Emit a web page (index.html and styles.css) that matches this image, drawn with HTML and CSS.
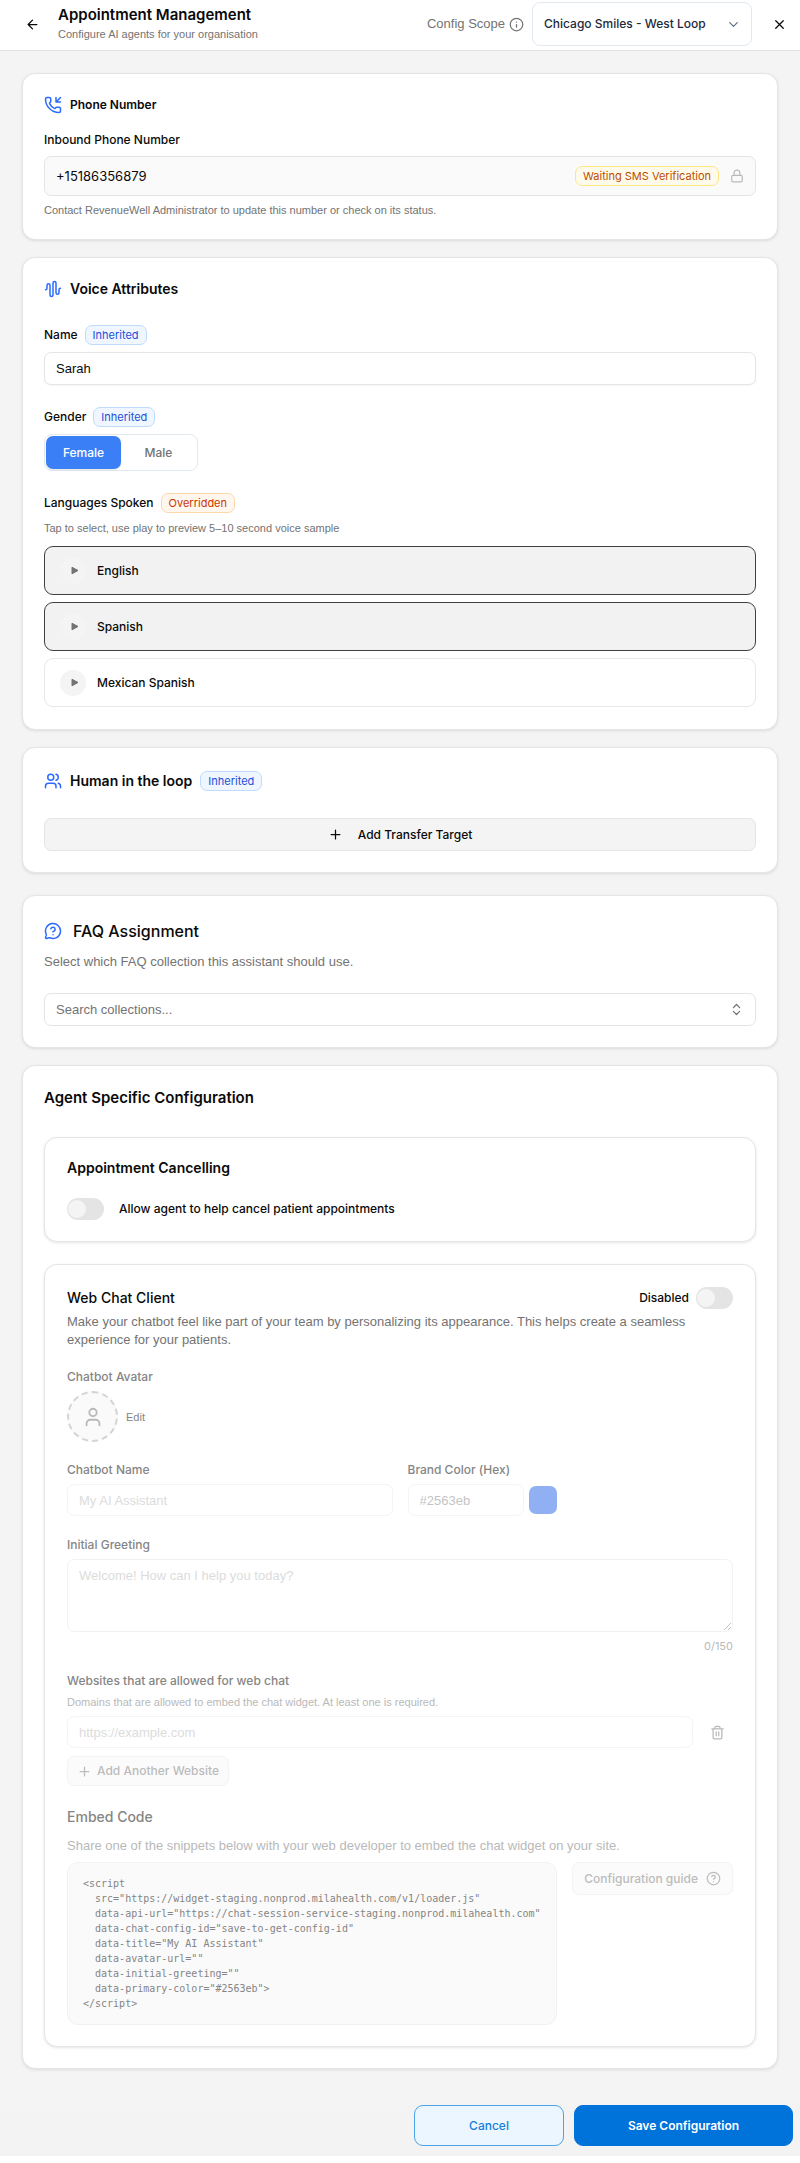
FILE: index.html
```html
<!DOCTYPE html>
<html lang="en">
<head>
<meta charset="utf-8">
<meta name="viewport" content="width=device-width, initial-scale=1">
<title>Appointment Management</title>
<link rel="stylesheet" href="styles.css">
</head>
<body>
<header class="topbar">
  <button class="icon-button back" type="button" aria-label="Back">
    <svg class="icon" width="15" height="15" viewBox="0 0 24 24"><path d="m12 19-7-7 7-7M19 12H5"/></svg>
  </button>
  <div class="heading">
    <h1>Appointment Management</h1>
    <p>Configure AI agents for your organisation</p>
  </div>
  <div class="scope">
    <label for="scope">Config Scope</label>
    <svg class="icon" width="15" height="15" viewBox="0 0 24 24"><circle cx="12" cy="12" r="10"/><path d="M12 16v-4M12 8h.01"/></svg>
    <div class="scope-select">
      <select id="scope"><option>Chicago Smiles - West Loop</option></select>
      <svg class="icon" width="15" height="15" viewBox="0 0 24 24"><path d="m6 9 6 6 6-6"/></svg>
    </div>
  </div>
  <button class="icon-button close" type="button" aria-label="Close">
    <svg class="icon" width="15" height="15" viewBox="0 0 24 24"><path d="M18 6 6 18M6 6l12 12"/></svg>
  </button>
</header>

<main class="page">
  <section class="card phone">
    <h2 class="title small">
      <svg class="icon" width="18" height="18" viewBox="0 0 24 24"><path d="M16 2v6h6M22 2l-6 6"/><path d="M13.832 16.568a1 1 0 0 0 1.213-.303l.355-.465A2 2 0 0 1 17 15h3a2 2 0 0 1 2 2v3a2 2 0 0 1-2 2A18 18 0 0 1 2 4a2 2 0 0 1 2-2h3a2 2 0 0 1 2 2v3a2 2 0 0 1-.8 1.6l-.468.351a1 1 0 0 0-.292 1.233 14 14 0 0 0 6.392 6.384"/></svg>
      Phone Number
    </h2>
    <label class="label" for="phone">Inbound Phone Number</label>
    <div class="phone-field">
      <input id="phone" type="text" value="+15186356879" readonly>
      <span class="badge amber">Waiting SMS Verification</span>
      <svg class="icon lock" width="14" height="14" viewBox="0 0 24 24"><rect x="3" y="11" width="18" height="11" rx="2"/><path d="M7 11V7a5 5 0 0 1 10 0v4"/></svg>
    </div>
    <p class="hint">Contact RevenueWell Administrator to update this number or check on its status.</p>
  </section>

  <section class="card voice">
    <h2 class="title strong">
      <svg class="icon" width="18" height="18" viewBox="0 0 24 24"><path d="M2 13a2 2 0 0 0 2-2V7a2 2 0 0 1 4 0v13a2 2 0 0 0 4 0V4a2 2 0 0 1 4 0v13a2 2 0 0 0 4 0v-4a2 2 0 0 1 2-2"/></svg>
      Voice Attributes
    </h2>
    <div class="field">
      <div class="label-row"><label class="label" for="name">Name</label><span class="badge blue">Inherited</span></div>
      <input class="input" id="name" type="text" value="Sarah">
    </div>
    <div class="field">
      <div class="label-row"><span class="label" id="gender">Gender</span><span class="badge blue">Inherited</span></div>
      <div class="segmented" role="group" aria-labelledby="gender">
        <button class="segment active" type="button" aria-pressed="true">Female</button>
        <button class="segment" type="button" aria-pressed="false">Male</button>
      </div>
    </div>
    <div class="field">
      <div class="label-row"><span class="label">Languages Spoken</span><span class="badge orange">Overridden</span></div>
      <p class="hint">Tap to select, use play to preview 5–10 second voice sample</p>
      <ul class="languages">
        <li class="language selected">
          <button class="play" type="button" aria-label="Play English sample"><svg width="9" height="9" viewBox="0 0 9 9"><path d="M2 1.2v6.6l6-3.3z"/></svg></button>
          <button class="language-name" type="button" aria-pressed="true">English</button>
        </li>
        <li class="language selected">
          <button class="play" type="button" aria-label="Play Spanish sample"><svg width="9" height="9" viewBox="0 0 9 9"><path d="M2 1.2v6.6l6-3.3z"/></svg></button>
          <button class="language-name" type="button" aria-pressed="true">Spanish</button>
        </li>
        <li class="language">
          <button class="play" type="button" aria-label="Play Mexican Spanish sample"><svg width="9" height="9" viewBox="0 0 9 9"><path d="M2 1.2v6.6l6-3.3z"/></svg></button>
          <button class="language-name" type="button" aria-pressed="false">Mexican Spanish</button>
        </li>
      </ul>
    </div>
  </section>

  <section class="card human">
    <h2 class="title strong">
      <svg class="icon" width="18" height="18" viewBox="0 0 24 24"><path d="M16 21v-2a4 4 0 0 0-4-4H6a4 4 0 0 0-4 4v2"/><circle cx="9" cy="7" r="4"/><path d="M22 21v-2a4 4 0 0 0-3-3.87M16 3.13a4 4 0 0 1 0 7.75"/></svg>
      Human in the loop
      <span class="badge blue">Inherited</span>
    </h2>
    <button class="add-target" type="button">
      <svg class="icon" width="15" height="15" viewBox="0 0 24 24"><path d="M5 12h14M12 5v14"/></svg>
      Add Transfer Target
    </button>
  </section>

  <section class="card faq">
    <h2 class="title large">
      <svg class="icon" width="18" height="18" viewBox="0 0 24 24"><path d="M2.992 16.342a2 2 0 0 1 .094 1.167l-1.065 3.29a1 1 0 0 0 1.236 1.168l3.413-.998a2 2 0 0 1 1.099.092 10 10 0 1 0-4.777-4.719"/><path d="M9.09 9a3 3 0 0 1 5.83 1c0 2-3 3-3 3M12 17h.01"/></svg>
      FAQ Assignment
    </h2>
    <p class="description">Select which FAQ collection this assistant should use.</p>
    <button class="combobox" type="button" aria-haspopup="listbox">
      Search collections...
      <svg class="icon" width="15" height="15" viewBox="0 0 24 24"><path d="m7 15 5 5 5-5M7 9l5-5 5 5"/></svg>
    </button>
  </section>

  <section class="card agent">
    <h2 class="title bold">Agent Specific Configuration</h2>

    <section class="card inner cancelling">
      <h3 class="title strong">Appointment Cancelling</h3>
      <label class="switch-row"><input class="switch" type="checkbox" role="switch">Allow agent to help cancel patient appointments</label>
    </section>

    <section class="card inner webchat">
      <div class="webchat-head">
        <h3 class="title">Web Chat Client</h3>
        <label class="switch-label">Disabled<input class="switch" type="checkbox" role="switch"></label>
      </div>
      <p class="description webchat-text">Make your chatbot feel like part of your team by personalizing its appearance. This helps create a seamless experience for your patients.</p>

      <div class="webchat-body">
        <div class="group">
          <span class="label">Chatbot Avatar</span>
          <div class="avatar-row">
            <span class="avatar"><svg class="icon" width="22" height="22" viewBox="0 0 24 24"><circle cx="12" cy="7" r="4"/><path d="M19 21v-2a4 4 0 0 0-4-4H9a4 4 0 0 0-4 4v2"/></svg></span>
            <button class="edit" type="button" disabled>Edit</button>
          </div>
        </div>
        <div class="columns">
          <div class="group">
            <label class="label" for="bot">Chatbot Name</label>
            <input class="input" id="bot" type="text" placeholder="My AI Assistant" disabled>
          </div>
          <div class="group">
            <label class="label" for="hex">Brand Color (Hex)</label>
            <div class="color-row">
              <input class="input" id="hex" type="text" value="#2563eb" disabled>
              <input class="swatch" type="color" value="#2563eb" aria-label="Brand color" disabled>
            </div>
          </div>
        </div>
        <div class="group greeting">
          <label class="label" for="greeting">Initial Greeting</label>
          <textarea class="input" id="greeting" placeholder="Welcome! How can I help you today?" disabled></textarea>
          <span class="counter">0/150</span>
        </div>
        <div class="sites">
          <label class="label" for="site">Websites that are allowed for web chat</label>
          <p class="hint">Domains that are allowed to embed the chat widget. At least one is required.</p>
          <div class="site-row">
            <input class="input" id="site" type="url" placeholder="https://example.com" disabled>
            <button class="icon-button trash" type="button" aria-label="Remove website" disabled>
              <svg class="icon" width="15" height="15" viewBox="0 0 24 24"><path d="M3 6h18M19 6v14a2 2 0 0 1-2 2H7a2 2 0 0 1-2-2V6M8 6V4a2 2 0 0 1 2-2h4a2 2 0 0 1 2 2v2M10 11v6M14 11v6"/></svg>
            </button>
          </div>
          <button class="soft-button" type="button" disabled>
            <svg class="icon" width="15" height="15" viewBox="0 0 24 24"><path d="M5 12h14M12 5v14"/></svg>
            Add Another Website
          </button>
        </div>
        <h4 class="title embed-title">Embed Code</h4>
        <p class="description embed-text">Share one of the snippets below with your web developer to embed the chat widget on your site.</p>
        <div class="embed">
          <pre class="code"><code>&lt;script
  src="https://widget-staging.nonprod.milahealth.com/v1/loader.js"
  data-api-url="https://chat-session-service-staging.nonprod.milahealth.com"
  data-chat-config-id="save-to-get-config-id"
  data-title="My AI Assistant"
  data-avatar-url=""
  data-initial-greeting=""
  data-primary-color="#2563eb"&gt;
&lt;/script&gt;</code></pre>
          <button class="soft-button guide" type="button" disabled>
            Configuration guide
            <svg class="icon" width="15" height="15" viewBox="0 0 24 24"><circle cx="12" cy="12" r="10"/><path d="M9.09 9a3 3 0 0 1 5.83 1c0 2-3 3-3 3M12 17h.01"/></svg>
          </button>
        </div>
      </div>
    </section>
  </section>
</main>

<footer class="actions">
  <button class="action cancel" type="button">Cancel</button>
  <button class="action save" type="button">Save Configuration</button>
</footer>
</body>
</html>
```

FILE: styles.css
```css
:root {
  --ui: Inter, "Liberation Sans", sans-serif;
  --text: "Liberation Sans", Arial, sans-serif;
}

* {
  box-sizing: border-box;
}

body {
  margin: 0;
  background: #fff;
  color: #0a0a0a;
  font: 400 13px/18px var(--text);
}

h1, h2, h3, h4, p, ul, pre {
  margin: 0;
  padding: 0;
}

button, input, select, textarea {
  margin: 0;
  font: inherit;
  color: inherit;
}

button {
  padding: 0;
  border: 0;
  background: none;
}

.icon {
  flex: none;
  fill: none;
  stroke: currentColor;
  stroke-width: 2;
  stroke-linecap: round;
  stroke-linejoin: round;
}

.icon-button {
  display: flex;
  flex: none;
  align-items: center;
  justify-content: center;
  width: 32px;
  height: 32px;
}

.label,
.segment,
.language-name,
.add-target,
.switch-row,
.switch-label,
.soft-button,
.action,
.scope-select select {
  font-family: var(--ui);
  font-size: 12px;
  font-weight: 500;
}

/* Top bar */
.topbar {
  display: flex;
  align-items: center;
  height: 51px;
  padding: 0 5px 2px 16px;
  border-bottom: 1px solid #e2e2e2;
}

.heading {
  flex: 1;
  margin-left: 10px;
}

.heading h1 {
  font-family: var(--ui);
  font-size: 15px;
  font-weight: 600;
  line-height: 20px;
}

.heading p {
  color: #737373;
  font-size: 11px;
}

.scope {
  display: flex;
  align-items: center;
  gap: 4px;
  color: #737373;
}

.scope-select {
  display: grid;
  align-items: center;
  margin-left: 4px;
  color: #64748b;
}

.scope-select > * {
  grid-area: 1 / 1;
}

.scope-select .icon {
  justify-self: end;
  margin-right: 11px;
  pointer-events: none;
}

.scope-select select {
  width: 220px;
  height: 44px;
  padding: 0 11px;
  border: 1px solid #e2e8f0;
  border-radius: 8px;
  background: #fff;
  color: #1e293b;
  appearance: none;
}

.close {
  margin-left: 11px;
}

/* Cards */
.page {
  display: flex;
  flex-direction: column;
  gap: 17px;
  padding: 22px 22px 36px;
  background: #f4f4f4;
}

.card {
  padding: 21px;
  border: 1px solid #e5e5e5;
  border-radius: 13px;
  background: #fff;
  box-shadow: 0 1px 3px rgb(0 0 0 / 10%);
}

.inner {
  padding: 21px 22px;
}

.title {
  display: flex;
  align-items: center;
  gap: 8px;
  font-family: var(--ui);
  font-size: 14px;
  font-weight: 500;
  line-height: 20px;
}

.title .icon {
  color: #2b6bff;
}

.title.small {
  font-size: 12px;
  font-weight: 600;
}

.title.strong {
  font-weight: 600;
}

.title.large {
  gap: 11px;
  font-size: 16px;
}

.title.bold {
  font-size: 15px;
  font-weight: 600;
}

.label-row {
  display: flex;
  align-items: center;
  gap: 7px;
}

.badge {
  padding: 0 7px;
  border: 1px solid;
  border-radius: 7px;
  font-family: var(--ui);
  font-size: 11px;
  font-weight: 400;
  line-height: 18px;
}

.blue {
  border-color: #bfdbfe;
  background: #eff6ff;
  color: #1d4ed8;
}

.orange {
  border-color: #fed7aa;
  background: #fff7ed;
  color: #ca3500;
}

.amber {
  border-color: #fee685;
  background: #fffbeb;
  color: #bb4d00;
}

.hint {
  color: #737373;
  font-size: 11px;
  line-height: 16px;
}

.description {
  color: #737373;
}

.input {
  display: block;
  width: 100%;
  height: 33px;
  padding: 0 11px;
  border: 1px solid #e5e5e5;
  border-radius: 7px;
  background: #fff;
  box-shadow: 0 1px 2px rgb(0 0 0 / 4%);
}

/* Phone number */
.phone .label {
  display: block;
  margin-top: 16px;
}

.phone-field {
  display: flex;
  align-items: center;
  gap: 11px;
  height: 40px;
  margin: 7px 0 6px;
  padding: 0 11px;
  border: 1px solid #e5e5e5;
  border-radius: 7px;
  background: #fafafa;
}

.phone-field input {
  flex: 1;
  min-width: 0;
  padding: 0;
  border: 0;
  background: none;
  font-family: var(--ui);
}

.lock {
  color: #b9b9b9;
}

/* Voice */
.voice {
  padding-bottom: 22px;
}

.field {
  margin-top: 22px;
}

.voice .title + .field {
  margin-top: 26px;
}

.voice .input,
.segmented {
  margin-top: 7px;
}

.segmented {
  display: inline-flex;
  padding: 1px;
  border: 1px solid #e2e8f0;
  border-radius: 8px;
}

.segment {
  width: 75px;
  height: 33px;
  border-radius: 7px;
  color: #737373;
}

.segment.active {
  background: #3b7ff7;
  color: #fff;
  box-shadow: 0 1px 2px rgb(0 0 0 / 10%);
}

.voice .hint {
  margin-top: 7px;
}

.languages {
  display: flex;
  flex-direction: column;
  gap: 7px;
  margin-top: 10px;
  list-style: none;
}

.language {
  display: flex;
  align-items: center;
  gap: 11px;
  height: 49px;
  padding: 0 15px;
  border: 1px solid #e8e8e8;
  border-radius: 9px;
}

.language.selected {
  border-color: #404040;
  background: #f2f2f2;
}

.play {
  display: flex;
  align-items: center;
  justify-content: center;
  width: 26px;
  height: 26px;
  padding-left: 2px;
  border-radius: 50%;
  background: #f4f4f4;
}

.play svg {
  fill: #737373;
  stroke: #737373;
  stroke-linejoin: round;
}

.language-name {
  flex: 1;
  align-self: stretch;
  text-align: left;
}

/* Human in the loop */
.human .title {
  margin-top: 2px;
}

.add-target {
  display: flex;
  align-items: center;
  justify-content: center;
  gap: 15px;
  width: 100%;
  height: 33px;
  margin-top: 27px;
  border: 1px solid #e5e5e5;
  border-radius: 7px;
  background: #f4f4f4;
}

/* FAQ */
.faq {
  margin-top: 5px;
}

.faq .title {
  margin-top: 4px;
}

.faq .description {
  margin-top: 12px;
}

.combobox {
  display: flex;
  align-items: center;
  justify-content: space-between;
  width: 100%;
  height: 33px;
  margin-top: 22px;
  padding: 0 11px;
  border: 1px solid #e5e5e5;
  border-radius: 7px;
  color: #737373;
}

/* Agent configuration */
.title.bold {
  margin-top: 1px;
}

.cancelling {
  margin-top: 29px;
}

.cancelling .title {
  margin-top: -1px;
}

.switch-row {
  display: flex;
  align-items: center;
  gap: 15px;
  margin-top: 20px;
}

.switch-label {
  display: flex;
  align-items: center;
  gap: 7px;
}

.switch {
  display: flex;
  align-items: center;
  width: 37px;
  height: 22px;
  padding: 1px;
  border-radius: 11px;
  background: #e4e4e4;
  appearance: none;
}

.switch::before {
  content: "";
  width: 18px;
  height: 18px;
  border-radius: 50%;
  background: #f4f4f4;
}

.webchat {
  margin-top: 22px;
}

.webchat-head {
  display: flex;
  align-items: center;
  justify-content: space-between;
  margin-top: 1px;
}

.webchat-text {
  margin: 4px 30px 0 0;
}

.webchat-body {
  margin-top: 19px;
  color: #858585;
}

.webchat-body .group {
  display: flex;
  flex-direction: column;
  gap: 5px;
}

.avatar-row {
  display: flex;
  align-items: center;
  gap: 8px;
}

.avatar {
  display: flex;
  align-items: center;
  justify-content: center;
  width: 51px;
  height: 51px;
  border: 2px dashed #d4d4d4;
  border-radius: 50%;
  background: #fafafa;
  color: #b9b9b9;
}

.edit {
  color: #858585;
  font-size: 11px;
}

.columns {
  display: grid;
  grid-template-columns: 1fr 1fr;
  gap: 15px;
  margin: 19px 0 20px;
}

.color-row {
  display: flex;
  align-items: center;
  gap: 5px;
}

.color-row .input {
  width: 116px;
}

.webchat-body .input {
  height: 32px;
  border-color: #f4f4f4;
  color: #c4c4c4;
  box-shadow: none;
}

.webchat-body .input::placeholder {
  color: #dcdcdc;
}

.swatch {
  width: 28px;
  height: 28px;
  padding: 0;
  border: 0;
  border-radius: 7px;
  overflow: hidden;
  background: none;
  opacity: .5;
  appearance: none;
}

.swatch::-webkit-color-swatch-wrapper {
  padding: 0;
}

.swatch::-webkit-color-swatch {
  border: 0;
}

.webchat-body textarea.input {
  height: 73px;
  padding: 7px 11px;
  border-color: #e0e0e0;
  opacity: .4;
  resize: vertical;
}

.webchat-body textarea.input::placeholder {
  color: #a8a8a8;
}

.counter {
  align-self: flex-end;
  color: #b9b9b9;
  font-family: var(--ui);
  font-size: 11px;
}

.sites {
  margin-top: 17px;
}

.sites .label {
  display: block;
}

.webchat-body .hint,
.webchat-body .description {
  color: #b9b9b9;
}

.sites .hint {
  margin: 4px 0 6px;
}

.site-row {
  display: flex;
  align-items: center;
  gap: 8px;
}

.trash {
  color: #b9b9b9;
}

.soft-button {
  display: flex;
  flex: none;
  align-items: center;
  gap: 5px;
  height: 30px;
  margin-top: 8px;
  padding: 0 9px;
  border: 1px solid #f4f4f4;
  border-radius: 7px;
  background: #fbfbfb;
  color: #bcbcbc;
}

.embed-title {
  margin-top: 21px;
}

.embed-text {
  margin-top: 10px;
}

.embed {
  display: flex;
  align-items: flex-start;
  gap: 15px;
  margin-top: 7px;
}

.code {
  flex: 1;
  min-width: 0;
  padding: 13px 15px;
  overflow: hidden;
  border: 1px solid #f2f2f2;
  border-radius: 11px;
  background: #fafafa;
  font: 10px/15px "DejaVu Sans Mono", monospace;
}

.code code {
  font: inherit;
}

.guide {
  gap: 8px;
  height: 33px;
  margin-top: 0;
  padding: 0 11px;
}

/* Footer */
.actions {
  display: flex;
  justify-content: flex-end;
  gap: 10px;
  margin-bottom: 7px;
  padding: 0 7px 10px;
  background: #f3f3f3;
}

.action {
  height: 41px;
  border: 1px solid #0073db;
  border-radius: 9px;
}

.cancel {
  width: 150px;
  border-color: #4ba3ea;
  background: #ebf6ff;
  color: #1580dc;
}

.save {
  width: 219px;
  background: #0073db;
  color: #fff;
  font-weight: 600;
}
```
